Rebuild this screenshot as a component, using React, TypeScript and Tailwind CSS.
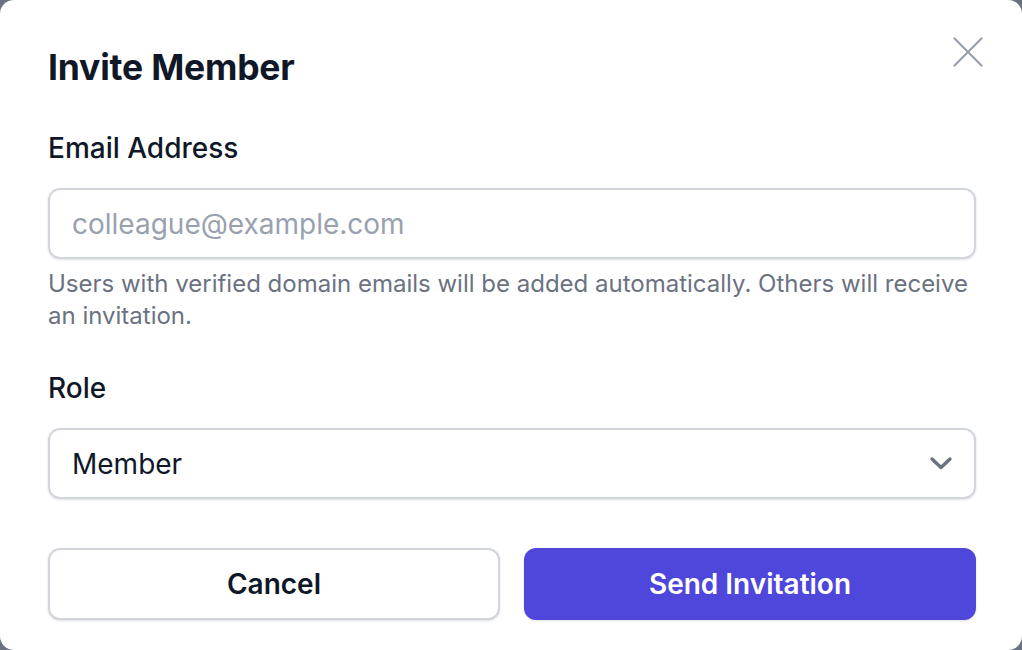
const CloseIcon = () => (
  <svg width="30" height="30" viewBox="0 0 30 30" fill="none" stroke="currentColor" strokeWidth="2.2" strokeLinecap="round">
    <path d="M1.5 1.5 L28.5 28.5 M28.5 1.5 L1.5 28.5" />
  </svg>
);

const Chevron = () => (
  <svg width="24" height="16" viewBox="0 0 24 16" fill="none" stroke="currentColor" strokeWidth="3.4" strokeLinecap="round" strokeLinejoin="round">
    <path d="M3 3 L12 11.5 L21 3" />
  </svg>
);

const InviteMemberModal = () => {
  return (
    <div className="relative h-full w-full rounded-[14px] bg-white pl-12 pr-[46px] pt-12 pb-[31px]">
      {/* Close */}
      <button className="absolute right-[39px] top-[37px] text-gray-400">
        <CloseIcon />
      </button>

      <h2 className="text-[35.5px] leading-[40px] font-bold text-gray-900 tracking-[-0.2px]">
        Invite Member
      </h2>

      {/* Email */}
      <label className="mt-[40px] block text-[28px] leading-[40px] font-medium text-gray-900">
        Email Address
      </label>
      <div className="mt-[20px] flex h-[71px] items-center rounded-[12px] border-2 border-gray-300 px-[22px] shadow-sm">
        <span className="text-[28px] text-gray-400">colleague@example.com</span>
      </div>
      <p className="mt-[9px] text-[24px] leading-[32px] text-gray-500">
        Users with verified domain emails will be added automatically. Others will receive an invitation.
      </p>

      {/* Role */}
      <label className="mt-[36px] block text-[28px] leading-[40px] font-medium text-gray-900">
        Role
      </label>
      <div className="mt-[20px] flex h-[71px] items-center justify-between rounded-[12px] border-2 border-gray-300 pl-[22px] pr-[21px] shadow-sm">
        <span className="text-[28px] text-gray-900">Member</span>
        <Chevron />
      </div>

      {/* Actions */}
      <div className="mt-[49px] grid grid-cols-2 gap-6">
        <button className="h-[72px] rounded-[12px] border-2 border-gray-300 bg-white text-[28px] font-semibold text-gray-900 shadow-sm">
          Cancel
        </button>
        <button className="h-[72px] rounded-[12px] bg-[#4f46dc] text-[28px] font-semibold text-white shadow-sm">
          Send Invitation
        </button>
      </div>
    </div>
  );
};

export default function App() {
  return (
    <div
      className="h-[650px] w-[1022px] overflow-hidden bg-gray-500 text-gray-500"
      style={{ fontFamily: "Inter, 'Noto Sans', sans-serif" }}
    >
      <InviteMemberModal />
    </div>
  );
}
